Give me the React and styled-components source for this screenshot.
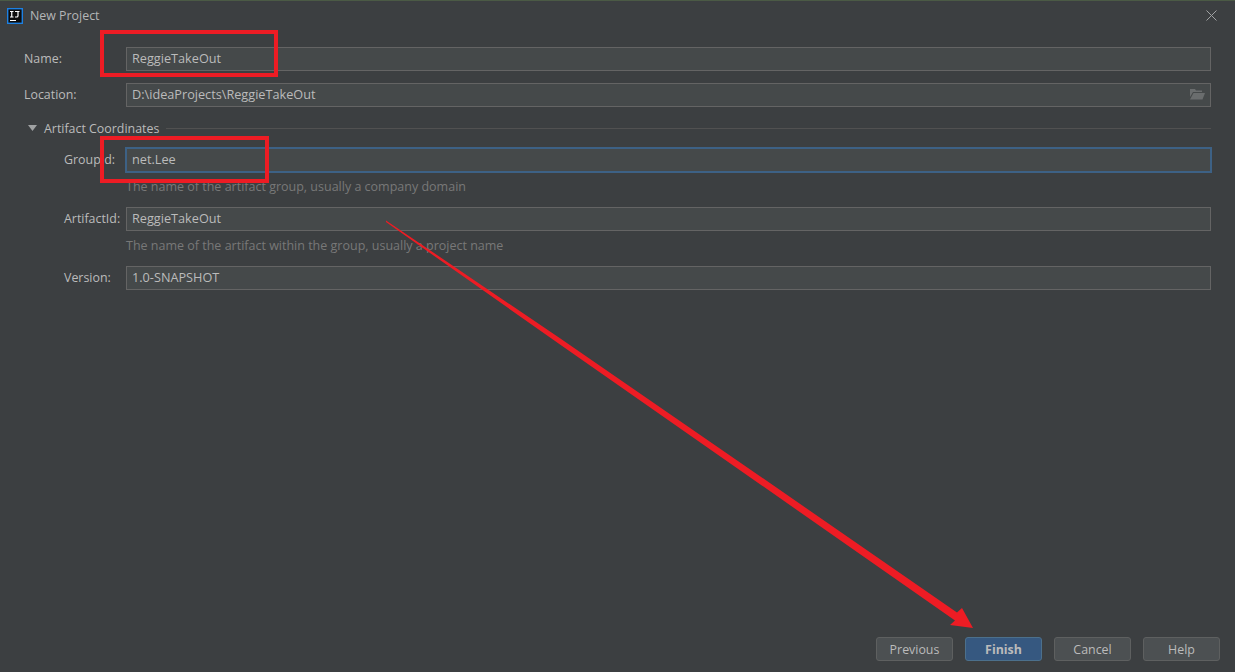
import React from "react";
import styled, { createGlobalStyle } from "styled-components";

const Global = createGlobalStyle`
  html, body { margin: 0; padding: 0; background: #3c3f41; }
  * { box-sizing: border-box; }
`;

const Dialog = styled.div`
  position: relative;
  width: 1235px;
  height: 672px;
  overflow: hidden;
  display: flex;
  flex-direction: column;
  background: #3c3f41;
  border-top: 1px solid #4b5a45;
  font-family: "Open Sans", "Noto Sans", sans-serif;
  font-size: 12.4px;
  color: #bbbbbb;
`;

const TitleBar = styled.div`
  height: 29px;
  display: flex;
  align-items: center;
  padding: 0 18px 0 7px;
  gap: 7px;
`;

const TitleText = styled.div`
  flex: 1;
  color: #b4b6b7;
`;

const Form = styled.div`
  flex: 1;
  display: flex;
  flex-direction: column;
  padding: 17px 24px 0 24px;
`;

const Row = styled.div`
  display: flex;
  align-items: center;
  height: 24px;
  margin-top: ${(p) => p.$top || 0}px;
  padding-left: ${(p) => p.$indent || 0}px;
`;

const Label = styled.div`
  width: ${(p) => (p.$indent ? 62 : 102)}px;
  flex-shrink: 0;
  padding-bottom: 1px;
`;

const Field = styled.div`
  position: relative;
  flex: 1;
  height: 24px;
  display: flex;
  align-items: center;
  justify-content: space-between;
  padding: 0 5px 2px;
  background: #45494a;
  border: 1px solid #646464;
  color: #bbbbbb;
  font-size: 12.7px;
`;

const FocusField = styled(Field)`
  height: 26px;
  margin-right: -1px;
  margin-left: -1px;
  padding: 0 5px 2px;
  border: 2px solid #3d6185;
`;

const Hint = styled.div`
  margin: 6px 0 0 102px;
  height: 18px;
  line-height: 18px;
  color: #787878;
  font-size: 12.5px;
`;

const SectionHead = styled.div`
  display: flex;
  align-items: center;
  height: 18px;
  margin-top: 12px;
  padding-left: 4px;
  gap: 7px;
`;

const Divider = styled.div`
  flex: 1;
  height: 1px;
  background: #515151;
`;

const Footer = styled.div`
  display: flex;
  justify-content: flex-end;
  gap: 12px;
  padding: 0 15px 11px 0;
`;

const Button = styled.div`
  width: 77px;
  height: 24px;
  display: flex;
  align-items: center;
  justify-content: center;
  border-radius: 3px;
  border: 1px solid ${(p) => (p.$primary ? "#4c708c" : "#5e6060")};
  background: ${(p) => (p.$primary ? "#365880" : "#4c5052")};
  color: #bbbbbb;
  font-weight: ${(p) => (p.$primary ? 700 : 400)};
`;

const Callout = styled.div`
  position: absolute;
  left: ${(p) => p.$x}px;
  top: ${(p) => p.$y}px;
  width: ${(p) => p.$w}px;
  height: ${(p) => p.$h}px;
  border: 4px solid #ed1c24;
`;

const ArrowLayer = styled.svg`
  position: absolute;
  left: 0;
  top: -1px;
  pointer-events: none;
`;

const AppLogo = () => (
  <svg width="16" height="16" viewBox="0 0 16 16">
    <rect x="0.7" y="0.7" width="14.6" height="14.6" fill="#0c0c0c" stroke="#1d80e2" strokeWidth="1.4" />
    <rect x="3" y="12" width="6" height="1" fill="#fff" />
    <path d="M3 3.500h3.500M4.750 3.500v5M3 9h3.500M8 3.500h4.500M11 3.500v4.200q0 1.300-1.300 1.300H8" fill="none" stroke="#fff" strokeWidth="1.200" />
  </svg>
);

const CloseIcon = () => (
  <svg width="11" height="11" viewBox="0 0 11 11">
    <path d="M0.500 0.500l10 10M10.500 0.500l-10 10" stroke="#a0a2a3" strokeWidth="1" />
  </svg>
);

const FolderIcon = () => (
  <svg width="15" height="12" viewBox="0 0 15 12">
    <path d="M0 1h5l1 1.500h6V4H3L0 9z" fill="#6a6d6e" />
    <path d="M3.500 5H15l-2.500 6.500H0z" fill="#6a6d6e" />
  </svg>
);

const Triangle = () => (
  <svg width="9" height="6" viewBox="0 0 9 6">
    <path d="M0 0h9L4.500 6z" fill="#a0a2a3" />
  </svg>
);

export default function App() {
  return (
    <>
      <Global />
      <Dialog>
        <TitleBar>
          <AppLogo />
          <TitleText>New Project</TitleText>
          <CloseIcon />
        </TitleBar>
        <Form>
          <Row>
            <Label>Name:</Label>
            <Field>ReggieTakeOut</Field>
          </Row>
          <Row $top={12}>
            <Label>Location:</Label>
            <Field>
              D:\ideaProjects\ReggieTakeOut
              <FolderIcon />
            </Field>
          </Row>
          <SectionHead>
            <Triangle />
            Artifact Coordinates
            <Divider />
          </SectionHead>
          <Row $top={11} $indent={40}>
            <Label $indent>GroupId:</Label>
            <FocusField>net.Lee</FocusField>
          </Row>
          <Hint>The name of the artifact group, usually a company domain</Hint>
          <Row $top={11} $indent={40}>
            <Label $indent>ArtifactId:</Label>
            <Field>ReggieTakeOut</Field>
          </Row>
          <Hint>The name of the artifact within the group, usually a project name</Hint>
          <Row $top={11} $indent={40}>
            <Label $indent>Version:</Label>
            <Field>1.0-SNAPSHOT</Field>
          </Row>
        </Form>
        <Footer>
          <Button>Previous</Button>
          <Button $primary>Finish</Button>
          <Button>Cancel</Button>
          <Button>Help</Button>
        </Footer>
        <Callout $x={100} $y={29} $w={178} $h={47} />
        <Callout $x={100} $y={135} $w={169} $h={47} />
        <ArrowLayer width="1235" height="672" viewBox="0 0 1235 672">
          <path d="M386 220.500 L560 338.200 L760 476.200 L957 612.500 L962 608 L973 628 L950 625 L955 620.500 L760 484.200 L560 344.600 L386 222 Z" fill="#ed1c24" />
        </ArrowLayer>
      </Dialog>
    </>
  );
}
